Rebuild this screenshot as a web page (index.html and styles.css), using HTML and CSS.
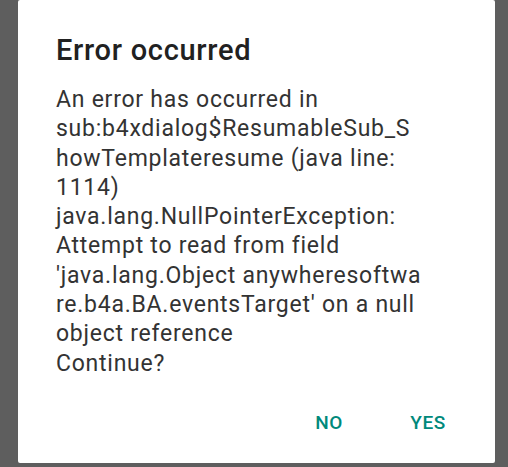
FILE: index.html
```html
<!DOCTYPE html>
<html lang="en">
<head>
    <meta charset="UTF-8">
    <meta name="viewport" content="width=device-width, initial-scale=1.0">
    <title>Error occurred</title>
    <link rel="stylesheet" href="styles.css">
</head>
<body>
    <div class="dialogo">
        <h2 class="titulo">Error occurred</h2>
        <p class="mensaje">
            An error has occurred in<br>
            sub:b4xdialog$ResumableSub_S<br>
            howTemplateresume (java line:<br>
            1114)<br>
            java.lang.NullPointerException:<br>
            Attempt to read from field<br>
            'java.lang.Object anywheresoftwa<br>
            re.b4a.BA.eventsTarget' on a null<br>
            object reference<br>
            Continue?
        </p>
        <div class="botones">
            <button type="button">NO</button>
            <button type="button">YES</button>
        </div>
    </div>
</body>
</html>
```

FILE: styles.css
```css
body {
    margin: 0;
    height: 467px;
    background: #5e5e5e;
    font-family: Roboto, "Liberation Sans", sans-serif;
    overflow: hidden;
}
.dialogo {
    margin-left: 18px;
    width: 477px;
    height: 463px;
    box-sizing: border-box;
    padding: 34px 0 0 38px;
    background: #fff;
    border-radius: 2px;
    display: flex;
    flex-direction: column;
}
.titulo {
    margin: 0;
    font-size: 29px;
    font-weight: 500;
    letter-spacing: 0.7px;
    line-height: 33px;
    color: #212121;
}
.mensaje {
    margin: 18px 0 0 0;
    font-size: 23px;
    letter-spacing: 0.75px;
    line-height: 29.3px;
    color: #333;
}
.botones {
    margin-top: auto;
    margin-bottom: 17px;
    padding-right: 23px;
    display: flex;
    justify-content: flex-end;
    gap: 11px;
}
.botones button {
    min-width: 88px;
    height: 48px;
    padding: 0 11px;
    border: none;
    background: none;
    font-family: Roboto, "Liberation Sans", sans-serif;
    font-size: 19px;
    font-weight: 500;
    letter-spacing: 0.5px;
    color: #00897b;
}
```
